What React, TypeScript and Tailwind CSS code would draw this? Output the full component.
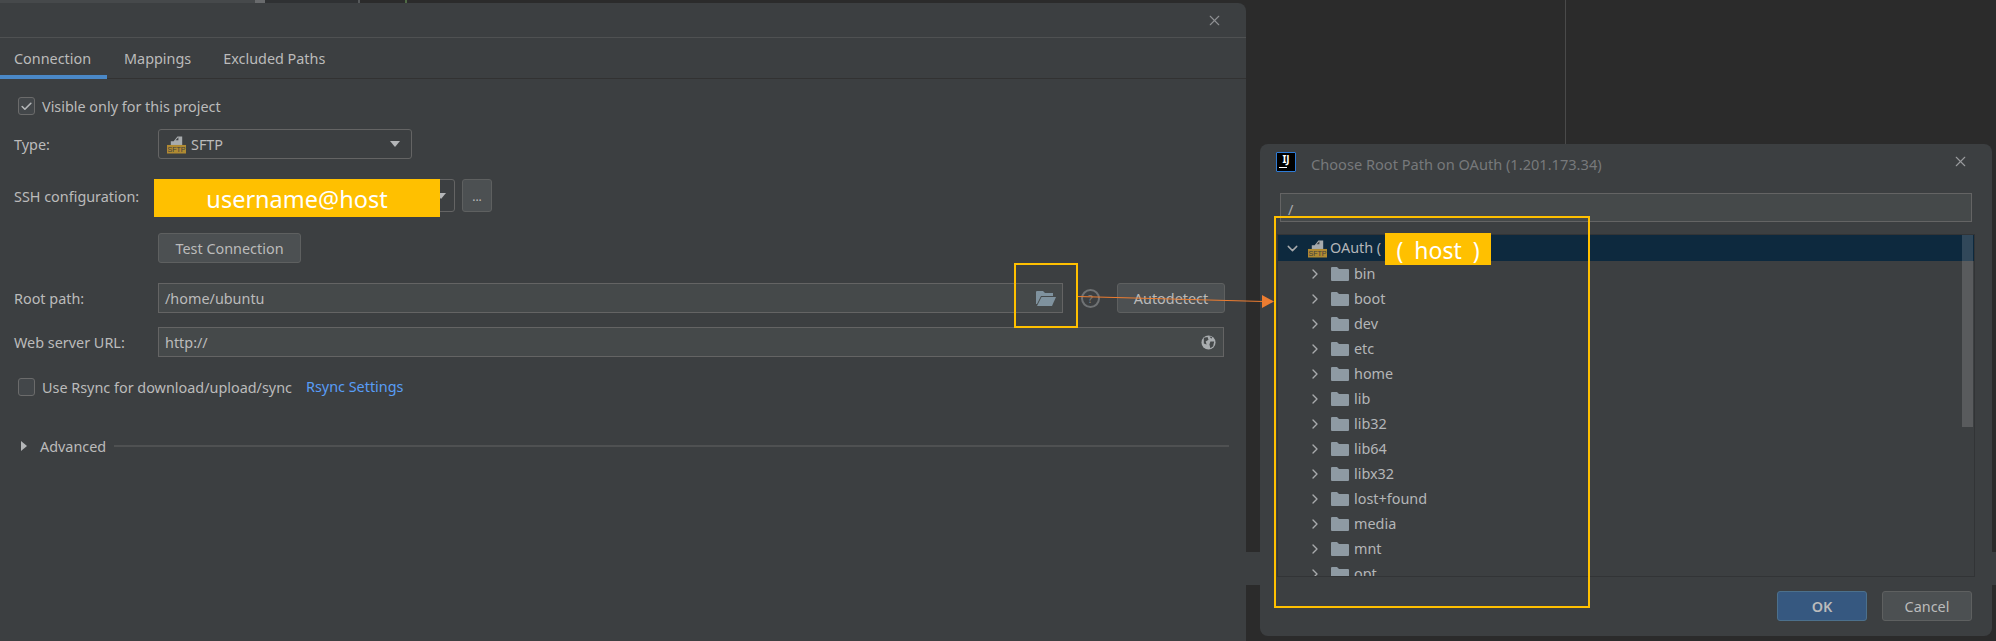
import React from 'react';
import { Check, ChevronDown, ChevronRight, X } from 'lucide-react';

const font = { fontFamily: '"Noto Sans", "Open Sans", sans-serif' };

const folders = ['bin', 'boot', 'dev', 'etc', 'home', 'lib', 'lib32', 'lib64', 'libx32', 'lost+found', 'media', 'mnt', 'opt'];

function SftpIcon({ className }: { className: string }) {
  return (
    <svg viewBox="0 0 20 20" className={className}>
      <path d="M7 7 L11 2 H16 V11 H4 V7 Z" fill="#a7abad" />
      <path d="M9 6 L12 3 V6 Z" fill="#3c3f41" />
      <rect x="0" y="11" width="20" height="9" fill="#b08a32" />
      <text x="10" y="18.4" textAnchor="middle" fontSize="7.5" fill="#3c3f41" fontFamily="Liberation Sans, sans-serif">SFTP</text>
    </svg>
  );
}

function FolderIcon() {
  return (
    <svg viewBox="0 0 18 14" className="w-[18px] h-[14px] shrink-0">
      <path d="M0 1 Q0 0 1 0 H6 L8 2 H17 Q18 2 18 3 V13 Q18 14 17 14 H1 Q0 14 0 13 Z" fill="#8e9aa3" />
    </svg>
  );
}

function OpenFolderIcon() {
  return (
    <svg viewBox="0 0 20 15" className="w-[20px] h-[15px]">
      <path d="M0 1 Q0 0 1 0 H7 L9 2 H17 V5 H5 L1 13 H0 Z" fill="#7f929e" />
      <path d="M5.5 6 H20 L16 15 H1 Z" fill="#7f929e" />
    </svg>
  );
}

function GlobeIcon() {
  return (
    <svg viewBox="0 0 16 16" className="w-[15px] h-[15px]">
      <circle cx="8" cy="8" r="7.5" fill="#a9adaf" />
      <path d="M3 3 L7 2 L8 5 L5 7 L6 10 L3 9 Z M10 7 L14 7 L13 12 L10 14 L9 10 Z M9 1.5 L12 2 L11 4 Z" fill="#45494a" />
    </svg>
  );
}

function Checkbox({ checked }: { checked?: boolean }) {
  return (
    <span className="w-[17px] h-[18px] rounded-[3px] border border-[#6b6b6b] bg-[#43474a] flex items-center justify-center shrink-0">
      {checked && <Check className="w-[13px] h-[13px] text-[#b5b8ba]" strokeWidth={3} />}
    </span>
  );
}

function FormButton({ children, className }: { children: React.ReactNode; className: string }) {
  return (
    <div className={`h-[30px] pt-[2px] rounded-[3px] border border-[#5e6060] bg-[#4c5052] flex items-center justify-center text-[#bbbbbb] ${className}`}>
      {children}
    </div>
  );
}

function FieldLabel({ children }: { children: React.ReactNode }) {
  return <div className="w-[144px] shrink-0 pt-[2px] text-[#bbbbbb]">{children}</div>;
}

function ConnectionDialog() {
  return (
    <div className="relative w-[1246px] shrink-0 mt-[3px] h-[638px] bg-[#3c3f41] rounded-tr-[8px] text-[14.4px]">
      <div className="h-[35px] border-b border-[#4f5152] flex items-center justify-end pr-[23px]">
        <X className="w-[17px] h-[17px] text-[#8f9193]" strokeWidth={1.5} />
      </div>
      <div className="h-[41px] border-b border-[#323232] flex text-[#bbbbbb]">
        <div className="w-[107px] pl-[14px] pt-[10px] border-b-[4px] border-[#4a88c7] h-[41px]">Connection</div>
        <div className="pl-[17px] pt-[10px]">Mappings</div>
        <div className="pl-[32px] pt-[10px]">Excluded Paths</div>
      </div>

      <div className="pl-[14px] pr-[17px] flex flex-col">
        <div className="mt-[18px] h-[18px] pl-[4px] flex items-center gap-[7px] text-[#bbbbbb]">
          <Checkbox checked />
          <span className="pt-[2px]">Visible only for this project</span>
        </div>

        <div className="mt-[14px] h-[30px] flex items-center">
          <FieldLabel>Type:</FieldLabel>
          <div className="w-[254px] h-[30px] rounded-[3px] border border-[#646464] bg-[#3c3f41] flex items-center pl-[8px] pr-[11px] gap-[5px] text-[#bbbbbb]">
            <SftpIcon className="w-[19px] h-[20px]" />
            <span className="pt-[2px]">SFTP</span>
            <span className="ml-auto w-0 h-0 border-x-[5px] border-x-transparent border-t-[6px] border-t-[#b4b6b8]" />
          </div>
        </div>

        <div className="mt-[20px] h-[33px] flex items-center">
          <FieldLabel>SSH configuration:</FieldLabel>
          <div className="w-[297px] h-[33px] rounded-[3px] border border-[#646464] flex items-center justify-end pr-[8px]">
            <span className="w-0 h-0 border-x-[5px] border-x-transparent border-t-[6px] border-t-[#b4b6b8]" />
          </div>
          <div className="ml-[7px] w-[30px] h-[33px] rounded-[3px] border border-[#5e6060] bg-[#4c5052] flex items-end justify-center pb-[5px] text-[#bbbbbb] text-[12px]">...</div>
        </div>

        <div className="mt-[21px] pl-[144px]">
          <FormButton className="w-[143px]">Test Connection</FormButton>
        </div>

        <div className="mt-[20px] h-[30px] flex items-center">
          <FieldLabel>Root path:</FieldLabel>
          <div className="w-[905px] h-[30px] border border-[#646464] bg-[#45494a] flex items-center pl-[6px] pr-[6px] text-[#bbbbbb]">
            <span className="pt-[2px]">/home/ubuntu</span>
            <span className="ml-auto flex"><OpenFolderIcon /></span>
          </div>
          <div className="ml-[18px] w-[19px] h-[19px] rounded-full border-2 border-[#6f7274] flex items-center justify-center text-[11px] leading-none text-[#7f8284]">?</div>
          <FormButton className="ml-[17px] w-[108px]">Autodetect</FormButton>
        </div>

        <div className="mt-[14px] h-[30px] flex items-center">
          <FieldLabel>Web server URL:</FieldLabel>
          <div className="w-[1066px] h-[30px] border border-[#646464] bg-[#45494a] flex items-center pl-[6px] pr-[7px] text-[#bbbbbb]">
            <span className="pt-[2px]">http://</span>
            <span className="ml-auto flex"><GlobeIcon /></span>
          </div>
        </div>

        <div className="mt-[21px] h-[18px] pl-[4px] flex items-center text-[#bbbbbb]">
          <Checkbox />
          <span className="ml-[7px] pt-[2px]">Use Rsync for download/upload/sync</span>
          <span className="ml-[14px] text-[#589df6]">Rsync Settings</span>
        </div>

        <div className="mt-[41px] h-[18px] flex items-center text-[#bbbbbb]">
          <span className="ml-[7px] w-0 h-0 border-y-[5px] border-y-transparent border-l-[6px] border-l-[#b4b6b8]" />
          <span className="ml-[13px] pt-[2px]">Advanced</span>
          <span className="ml-[8px] flex-1 h-[2px] bg-[#4f5152]" />
        </div>
      </div>
    </div>
  );
}

function ChooseDialog() {
  return (
    <div className="w-[732px] h-[492px] mt-[144px] ml-[14px] shrink-0 bg-[#3c3f41] rounded-[8px] flex flex-col text-[14.4px]">
      <div className="h-[49px] flex items-start pt-[8px] pl-[16px] pr-[23px]">
        <div className="w-[20px] h-[20px] bg-black border border-[#2e7bd6] rounded-[1px] flex flex-col items-center text-white font-bold text-[10px] leading-[12px]" style={font}>
          <span>IJ</span>
          <span className="w-[8px] h-[1px] mt-[2px] bg-white self-start ml-[2px]" />
        </div>
        <span className="ml-[15px] pt-[1px] text-[#77797b] text-[14.6px] leading-[22px]">Choose Root Path on OAuth (1.201.173.34)</span>
        <X className="ml-auto mt-[1px] w-[17px] h-[17px] text-[#9a9c9e]" strokeWidth={1.5} />
      </div>

      <div className="ml-[20px] w-[692px] h-[29px] border border-[#646464] bg-[#45494a] pl-[7px] text-[#a9abad] leading-[32px] overflow-hidden">/</div>

      <div className="relative ml-[17px] mt-[12px] w-[698px] h-[343px] border border-[#323436] overflow-hidden text-[#b4b6b8]">
        <div className="h-[26px] bg-[#0d293e] flex items-center pl-[6px]">
          <ChevronDown className="w-[17px] h-[17px] text-[#a9abad]" strokeWidth={2} />
          <SftpIcon className="ml-[7px] w-[19px] h-[20px]" />
          <span className="ml-[3px]">OAuth (</span>
        </div>
        {folders.map((name) => (
          <div key={name} className="h-[25px] flex items-center pl-[29px]">
            <ChevronRight className="w-[16px] h-[16px] text-[#a9abad] shrink-0" strokeWidth={2} />
            <span className="ml-[8px] flex"><FolderIcon /></span>
            <span className="ml-[5px]">{name}</span>
          </div>
        ))}
        <div className="absolute top-0 right-0 w-[11px] h-[192px] mr-[1px] bg-[#ffffff]/15" />
      </div>

      <div className="mt-[14px] pr-[20px] flex justify-end gap-[15px]">
        <div className="w-[90px] h-[30px] pt-[2px] rounded-[3px] border border-[#4c708c] bg-[#365880] flex items-center justify-center text-[#bbbbbb] font-semibold">OK</div>
        <FormButton className="w-[90px]">Cancel</FormButton>
      </div>
    </div>
  );
}

export default function App() {
  return (
    <div className="relative w-[1996px] h-[641px] overflow-hidden bg-[#2b2b2b] flex" style={font}>
      {/* window behind the dialogs */}
      <div className="absolute left-0 top-0 w-[1246px] h-[3px] flex">
        <div className="w-[255px] bg-[#46494b]" />
        <div className="w-[10px] bg-[#696b6d]" />
        <div className="w-[93px] bg-[#2f3133]" />
        <div className="w-[2px] bg-[#55585a]" />
        <div className="w-[45px] bg-[#2b2b2b]" />
        <div className="w-[2px] bg-[#4f6b45]" />
        <div className="flex-1 bg-[#2b2b2b]" />
      </div>
      <div className="absolute left-[1565px] top-0 w-[1px] h-[144px] bg-[#4a4a4a]" />
      <div className="absolute left-[1246px] top-[552px] w-[14px] h-[33px] bg-[#3c3f41]" />
      <div className="absolute left-[1992px] top-[552px] w-[4px] h-[33px] bg-[#3c3f41]" />

      <ConnectionDialog />
      <ChooseDialog />

      {/* annotations drawn on top of the screenshot */}
      <div className="absolute left-[154px] top-[179px] w-[286px] h-[38px] pt-[3px] bg-[#ffc000] flex items-center justify-center text-white text-[23.5px]">username@host</div>
      <div className="absolute left-[1385px] top-[233px] w-[106px] h-[32px] pt-[2px] bg-[#ffc000] flex items-center justify-center text-white text-[23px] [word-spacing:5px]">( host )</div>
      <div className="absolute left-[1014px] top-[263px] w-[64px] h-[65px] border-2 border-[#ffc000]" />
      <div className="absolute left-[1274px] top-[216px] w-[316px] h-[392px] border-2 border-[#ffc000]" />
      <svg className="absolute left-0 top-0 w-[1996px] h-[641px] pointer-events-none" viewBox="0 0 1996 641">
        <line x1="1078" y1="296.5" x2="1264" y2="301.5" stroke="#ed7d31" strokeWidth="1" />
        <polygon points="1262,295 1274,301.5 1262,308" fill="#ed7d31" />
      </svg>
    </div>
  );
}
